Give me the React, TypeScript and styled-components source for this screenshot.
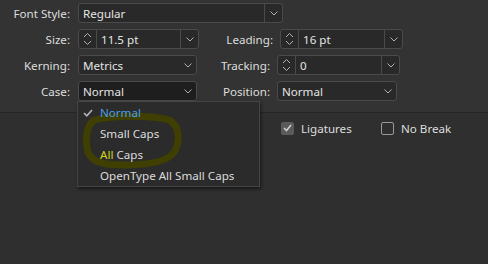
import styled, { createGlobalStyle } from "styled-components";

const GlobalStyle = createGlobalStyle`
  html, body {
    margin: 0;
    padding: 0;
    background: #2f2f2f;
  }
  body {
    font-family: "Noto Sans", "Open Sans", sans-serif;
    font-size: 11.6px;
  }
`;

const Panel = styled.div`
  position: relative;
  width: 488px;
  height: 264px;
  background: #2f2f2f;
  color: #dcdcdc;
`;

const TopSection = styled.div`
  display: flex;
  flex-direction: column;
  gap: 6px;
  padding-top: 3px;
  height: 109px;
  background: #333333;
  border-bottom: 1px solid #262626;
`;

const Row = styled.div`
  display: flex;
  align-items: center;
  height: 20px;
`;

// $w is the full width up to the next field, text ends $pad px before it
const Label = styled.div<{ $w: number; $pad: number }>`
  width: ${(p) => p.$w}px;
  flex: none;
  box-sizing: border-box;
  text-align: right;
  padding-right: ${(p) => p.$pad}px;
  color: #dedede;
  white-space: nowrap;
`;

const Box = styled.div<{ $w: number; $dark?: boolean }>`
  display: flex;
  align-items: stretch;
  width: ${(p) => p.$w}px;
  height: 20px;
  box-sizing: border-box;
  border: 1px solid #4a4a4a;
  border-radius: 3px;
  background: ${(p) => (p.$dark ? "#1e1e1e" : "#292929")};
  flex: none;
`;

const Value = styled.div`
  flex: 1;
  display: flex;
  align-items: center;
  padding-left: 4px;
  color: #e4e4e4;
  white-space: nowrap;
`;

const Spin = styled.div`
  width: 17px;
  flex: none;
  display: flex;
  align-items: center;
  justify-content: center;
  border-right: 1px solid #4a4a4a;
`;

const Drop = styled.div<{ $split?: boolean }>`
  width: 17px;
  flex: none;
  display: flex;
  align-items: center;
  justify-content: center;
  border-left: ${(p) => (p.$split ? "1px solid #4a4a4a" : "none")};
`;

const Chevron = () => (
  <svg width="8" height="5" viewBox="0 0 8 5">
    <path d="M0.5 0.5 L4 4 L7.5 0.5" fill="none" stroke="#b0b0b0" strokeWidth="1" />
  </svg>
);

const SpinIcon = () => (
  <svg width="9" height="14" viewBox="0 0 9 14">
    <path d="M1 5 L4.5 1.5 L8 5" fill="none" stroke="#b0b0b0" strokeWidth="1" />
    <path d="M1 9 L4.5 12.5 L8 9" fill="none" stroke="#b0b0b0" strokeWidth="1" />
  </svg>
);

const Select = ({ w, text, dark, split }: { w: number; text: string; dark?: boolean; split?: boolean }) => (
  <Box $w={w} $dark={dark}>
    <Value>{text}</Value>
    <Drop $split={split}>
      <Chevron />
    </Drop>
  </Box>
);

const Spinner = ({ w, text }: { w: number; text: string }) => (
  <Box $w={w}>
    <Spin>
      <SpinIcon />
    </Spin>
    <Value>{text}</Value>
    <Drop $split>
      <Chevron />
    </Drop>
  </Box>
);

const CheckRow = styled.div`
  display: flex;
  align-items: center;
  height: 30px;
  padding-left: 281px;
`;

const CheckItem = styled.label<{ $w?: number }>`
  display: flex;
  align-items: center;
  gap: 7px;
  width: ${(p) => (p.$w ? `${p.$w}px` : "auto")};
  color: #dedede;
`;

const CheckBox = styled.span<{ $on?: boolean }>`
  width: 13px;
  height: 13px;
  box-sizing: border-box;
  border-radius: 2px;
  border: 1px solid ${(p) => (p.$on ? "#5c5c5c" : "#9a9a9a")};
  background: ${(p) => (p.$on ? "#5a5a5a" : "transparent")};
  display: flex;
  align-items: center;
  justify-content: center;
`;

const Menu = styled.div`
  position: absolute;
  left: 77px;
  top: 101px;
  width: 183px;
  box-sizing: border-box;
  background: #2b2b2b;
  border: 1px solid #454545;
  box-shadow: 1px 2px 3px rgba(0, 0, 0, 0.5);
`;

const Item = styled.div<{ $active?: boolean }>`
  position: relative;
  z-index: 1;
  height: 21px;
  box-sizing: border-box;
  padding: 0 0 1px 22px;
  display: flex;
  align-items: center;
  color: ${(p) => (p.$active ? "#4a9ee8" : "#dcdcdc")};
  white-space: nowrap;
`;

const Tick = styled.span`
  position: absolute;
  left: 5px;
  top: 7px;
  display: flex;
`;

const Marked = styled.span`
  color: #d6d61c;
`;

// hand drawn highlight over the menu, in page coordinates
const Scribble = styled.svg`
  position: absolute;
  left: -78px;
  top: -102px;
  overflow: visible;
  pointer-events: none;
`;

export default function App() {
  return (
    <>
      <GlobalStyle />
      <Panel>
        <TopSection>
          <Row>
            <Label $w={78} $pad={8}>Font Style:</Label>
            <Select w={205} text="Regular" split />
          </Row>
          <Row>
            <Label $w={78} $pad={8}>Size:</Label>
            <Spinner w={121} text="11.5 pt" />
            <Label $w={81} $pad={7}>Leading:</Label>
            <Spinner w={123} text="16 pt" />
          </Row>
          <Row>
            <Label $w={78} $pad={8}>Kerning:</Label>
            <Select w={119} text="Metrics" />
            <Label $w={80} $pad={7}>Tracking:</Label>
            <Spinner w={123} text="0" />
          </Row>
          <Row>
            <Label $w={78} $pad={8}>Case:</Label>
            <Select w={119} text="Normal" dark />
            <Label $w={80} $pad={7}>Position:</Label>
            <Select w={120} text="Normal" />
          </Row>
        </TopSection>
        <CheckRow>
          <CheckItem $w={100}>
            <CheckBox $on>
              <svg width="9" height="8" viewBox="0 0 9 8">
                <path d="M1 4 L3.5 6.5 L8 1" fill="none" stroke="#cfcfcf" strokeWidth="1.6" />
              </svg>
            </CheckBox>
            Ligatures
          </CheckItem>
          <CheckItem>
            <CheckBox />
            No Break
          </CheckItem>
        </CheckRow>
        <Menu>
          <Scribble width="488" height="264" viewBox="0 0 488 264">
            <path
              d="M95 120 C112 115 152 115 169 120 C179 125 180 138 176 149 C171 161 150 165 125 165 C105 165 92 163 88 152 C85 140 86 127 93 121"
              fill="none"
              stroke="#3f3f02"
              strokeWidth="7"
              strokeLinecap="round"
            />
          </Scribble>
          <Item $active>
            <Tick>
              <svg width="10" height="8" viewBox="0 0 10 8">
                <path d="M1 4 L3.8 6.8 L9 1" fill="none" stroke="#b4b4b4" strokeWidth="1.6" />
              </svg>
            </Tick>
            Normal
          </Item>
          <Item>Small Caps</Item>
          <Item>
            <span>
              <Marked>All</Marked> Caps
            </span>
          </Item>
          <Item>OpenType All Small Caps</Item>
        </Menu>
      </Panel>
    </>
  );
}
